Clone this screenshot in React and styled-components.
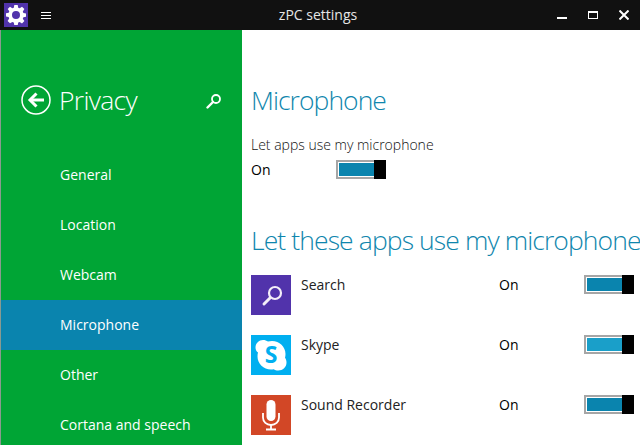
import styled, { createGlobalStyle } from "styled-components";

const GlobalStyle = createGlobalStyle`
  html, body {
    margin: 0;
    padding: 0;
    background: #fff;
  }
  body {
    font-family: "Open Sans", "Noto Sans", "Liberation Sans", sans-serif;
  }
`;

const NAV_ITEMS = ["General", "Location", "Webcam", "Microphone", "Other", "Cortana and speech"];

function SearchGlyph() {
  return (
    <svg width="40" height="40" viewBox="0 0 40 40" fill="none" stroke="#f3eef8">
      <circle cx="24" cy="18" r="6" strokeWidth="2.2" />
      <path d="M19 23 L13 29" strokeWidth="3" strokeLinecap="round" />
    </svg>
  );
}

function SkypeGlyph() {
  return (
    <svg width="40" height="40" viewBox="0 0 40 40">
      <path
        fill="#fff"
        d="M12 5c2 0 3.600.6 5 1.500 1.300-.3 2.700-.5 4-.5 7.500 0 13.500 5.800 13.500 13 0 1.300-.2 2.500-.5 3.700 1 1.400 1.500 3 1.500 4.800 0 4.500-3.700 8-8.300 8-1.700 0-3.300-.5-4.600-1.300-.8.1-1.700.2-2.600.2-7.500 0-13.500-5.800-13.500-13 0-1.300.2-2.600.5-3.800C5.200 16.200 4.500 14.300 4.500 12.500 4.500 8.300 8 5 12 5z"
      />
      <text
        x="20"
        y="28"
        textAnchor="middle"
        fontFamily="'Open Sans', sans-serif"
        fontWeight="700"
        fontSize="23"
        fill="#00aff0"
      >
        S
      </text>
    </svg>
  );
}

function MicGlyph() {
  return (
    <svg width="40" height="40" viewBox="0 0 40 40" fill="none">
      <rect x="15.500" y="5" width="9" height="21" rx="4.500" fill="#fff" />
      <path d="M12 18v4.500c0 4.500 3.500 7.500 8 7.500s8-3 8-7.500V18" stroke="#fff" strokeWidth="1.800" />
      <path d="M20 30v4M15 34.500h10" stroke="#fff" strokeWidth="1.800" />
    </svg>
  );
}

const APPS = [
  { name: "Search", bg: "#5133ab", on: "#0a84ae", icon: <SearchGlyph /> },
  { name: "Skype", bg: "#00aff0", on: "#1a9fc9", icon: <SkypeGlyph /> },
  { name: "Sound Recorder", bg: "#d24726", on: "#0a84ae", icon: <MicGlyph /> },
];

export default function App() {
  return (
    <>
      <GlobalStyle />
      <Window>
        <TitleBar>
          <TitleLeft>
            <GearTile>
              <svg width="20" height="20" viewBox="0 0 20 20">
                <path
                  fill="#fff"
                  fillRule="evenodd"
                  d="M8.300 0h3.400l.5 2.700 1.500.6 2.300-1.600 2.400 2.400-1.600 2.300.6 1.500 2.700.5v3.400l-2.700.5-.6 1.500 1.600 2.300-2.400 2.400-2.300-1.600-1.500.6-.5 2.700H8.300l-.5-2.700-1.500-.6L4 18.300l-2.400-2.400 1.600-2.300-.6-1.500L0 11.600V8.300l2.700-.5.6-1.500L1.700 4 4 1.700l2.300 1.600 1.500-.6zM10 6a4 4 0 1 0 0 8 4 4 0 0 0 0-8z"
                />
              </svg>
            </GearTile>
            <MenuLines>
              <span />
              <span />
              <span />
            </MenuLines>
          </TitleLeft>
          <WindowTitle>zPC settings</WindowTitle>
          <WindowButtons>
            <svg width="10" height="10" viewBox="0 0 10 10">
              <rect x="0" y="7" width="10" height="2" fill="#fff" />
            </svg>
            <svg width="10" height="10" viewBox="0 0 10 10" fill="none">
              <rect x="0.500" y="1.500" width="9" height="7" stroke="#fff" />
              <rect x="0" y="1" width="10" height="2" fill="#fff" />
            </svg>
            <svg width="10" height="10" viewBox="0 0 10 10">
              <path d="M0.500 0.500 L9.500 9.500 M9.500 0.500 L0.500 9.500" stroke="#fff" strokeWidth="2" />
            </svg>
          </WindowButtons>
        </TitleBar>

        <Body>
          <Sidebar>
            <SideHeader>
              <svg width="30" height="30" viewBox="0 0 30 30" fill="none" stroke="#fff">
                <circle cx="15" cy="15" r="14" strokeWidth="1.500" />
                <path d="M23 15H9" strokeWidth="3" />
                <path d="M15.500 8.500 L9 15 L15.500 21.500" strokeWidth="3" />
              </svg>
              <SideTitle>Privacy</SideTitle>
              <SideSearch>
                <svg width="16" height="16" viewBox="0 0 16 16" fill="none" stroke="#fff">
                  <circle cx="10" cy="6" r="4" strokeWidth="1.800" />
                  <path d="M7 9 L1.500 14.500" strokeWidth="2.400" strokeLinecap="round" />
                </svg>
              </SideSearch>
            </SideHeader>
            <NavList>
              {NAV_ITEMS.map((item) => (
                <NavItem key={item} $active={item === "Microphone"}>
                  {item}
                </NavItem>
              ))}
            </NavList>
          </Sidebar>

          <Content>
            <PageTitle>Microphone</PageTitle>
            <Label>Let apps use my microphone</Label>
            <MainToggleRow>
              <StateText>On</StateText>
              <Toggle $fill="#0a84ae" />
            </MainToggleRow>
            <SectionTitle>Let these apps use my microphone</SectionTitle>
            <AppList>
              {APPS.map((app) => (
                <AppRow key={app.name}>
                  <AppTile $bg={app.bg}>{app.icon}</AppTile>
                  <AppName>{app.name}</AppName>
                  <AppState>On</AppState>
                  <Toggle $fill={app.on} />
                </AppRow>
              ))}
            </AppList>
          </Content>
        </Body>
      </Window>
    </>
  );
}

/* ---------------- styled-components ---------------- */
const Window = styled.div`
  width: 640px;
  height: 445px;
  overflow: hidden;
  display: flex;
  flex-direction: column;
`;

const TitleBar = styled.header`
  height: 30px;
  flex-shrink: 0;
  background: #111111;
  display: grid;
  grid-template-columns: 1fr auto 1fr;
  align-items: center;
`;

const TitleLeft = styled.div`
  display: flex;
  align-items: center;
  padding-left: 4px;
  gap: 13px;
`;

const GearTile = styled.div`
  width: 24px;
  height: 24px;
  background: #5133ab;
  display: flex;
  align-items: center;
  justify-content: center;
`;

const MenuLines = styled.div`
  width: 10px;
  display: flex;
  flex-direction: column;
  gap: 2px;

  span {
    height: 1px;
    background: #fff;
  }
`;

const WindowTitle = styled.div`
  color: #e6e6e6;
  font-size: 14px;
  line-height: 30px;
  margin-left: -4px;
`;

const WindowButtons = styled.div`
  display: flex;
  justify-content: flex-end;
  align-items: center;
  gap: 21px;
  padding-right: 11px;

  svg {
    display: block;
  }
`;

const Body = styled.div`
  flex: 1;
  display: flex;
  min-height: 0;
`;

const Sidebar = styled.aside`
  width: 242px;
  flex-shrink: 0;
  background: #00a535;
  border-left: 1px solid #8a9a90;
  box-sizing: border-box;
`;

const SideHeader = styled.div`
  height: 120px;
  box-sizing: border-box;
  padding: 55px 20px 0 20px;
  display: flex;
  align-items: flex-start;
  gap: 8px;
  color: #fff;
`;

const SideTitle = styled.div`
  font-size: 26.500px;
  letter-spacing: -0.700px;
  font-weight: 300;
  line-height: 31px;
  flex: 1;
`;

const SideSearch = styled.div`
  padding-top: 7px;
`;

const NavList = styled.nav`
  display: flex;
  flex-direction: column;
`;

const NavItem = styled.div`
  height: 50px;
  line-height: 50px;
  padding-left: 59px;
  font-size: 14px;
  color: #fff;
  background: ${({ $active }) => ($active ? "#0a84ae" : "transparent")};
`;

const Content = styled.main`
  flex: 1;
  min-width: 0;
  padding: 55px 0 0 9px;
  background: #fff;
  white-space: nowrap;
  overflow: hidden;
`;

const PageTitle = styled.h1`
  margin: 0;
  font-size: 26.500px;
  letter-spacing: -0.950px;
  font-weight: 300;
  line-height: 30px;
  color: #0f86ad;
`;

const Label = styled.div`
  margin-top: 20px;
  font-size: 14px;
  line-height: 20px;
  font-weight: 300;
  color: #111;
`;

const MainToggleRow = styled.div`
  margin-top: 5px;
  display: flex;
  align-items: center;
  height: 19px;
`;

const StateText = styled.span`
  width: 85px;
  font-size: 14px;
  color: #000;
`;

const SectionTitle = styled.h2`
  margin: 45px 0 0;
  font-size: 26.500px;
  letter-spacing: -0.900px;
  font-weight: 300;
  line-height: 32px;
  color: #0f86ad;
`;

const AppList = styled.div`
  margin-top: 19px;
  display: flex;
  flex-direction: column;
  gap: 20px;
`;

const AppRow = styled.div`
  display: flex;
  align-items: flex-start;
  height: 40px;
`;

const AppTile = styled.div`
  width: 40px;
  height: 40px;
  background: ${({ $bg }) => $bg};
  flex-shrink: 0;

  svg {
    display: block;
  }
`;

const AppName = styled.div`
  width: 208px;
  padding-left: 10px;
  box-sizing: border-box;
  font-size: 14px;
  line-height: 20px;
  color: #222;
`;

const AppState = styled.div`
  width: 85px;
  font-size: 14px;
  line-height: 20px;
  color: #000;
`;

const Toggle = styled.div`
  width: 50px;
  height: 19px;
  box-sizing: border-box;
  flex-shrink: 0;
  display: flex;
  border: 2px solid #a6a6a6;
  border-right: none;
  background: #fff;

  &::before {
    content: "";
    flex: 1;
    margin: 1px 0 1px 1px;
    background: ${({ $fill }) => $fill};
  }

  &::after {
    content: "";
    width: 12px;
    margin: -2px 0;
    background: #000;
  }
`;
